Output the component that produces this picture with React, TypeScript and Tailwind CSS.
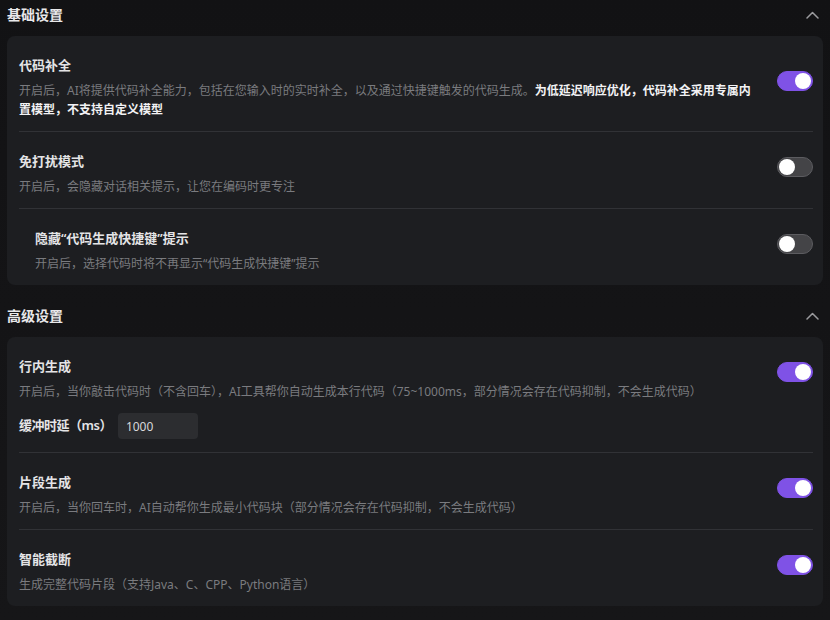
import { useState, type ReactNode } from 'react';

// Latin glyphs (and curly quotes) from Noto Sans, CJK falls through to the CJK face
const FONT = { fontFamily: '"Noto Sans", "Noto Sans CJK SC", sans-serif' };

function Toggle({ on, onChange }: { on: boolean; onChange: (v: boolean) => void }) {
  return (
    <button
      type="button"
      onClick={() => onChange(!on)}
      className={`relative mb-[13px] ml-6 h-5 w-9 shrink-0 rounded-full border transition-colors ${
        on ? 'border-[#7f52e6] bg-[#7f52e6]' : 'border-[#5c5c60] bg-[#444447]'
      }`}
    >
      <span
        className={`absolute top-1/2 h-4 w-4 -translate-y-1/2 rounded-full bg-white transition-all ${
          on ? 'left-[17px]' : 'left-[1px]'
        }`}
      />
    </button>
  );
}

function SettingRow({
  title,
  desc,
  defaultOn,
  indent,
  divider = true,
  children,
}: {
  title: string;
  desc: ReactNode;
  defaultOn: boolean;
  indent?: boolean;
  divider?: boolean;
  children?: ReactNode;
}) {
  const [on, setOn] = useState(defaultOn);
  return (
    <div className={`pt-[19px] pb-[12px] ${divider ? 'border-b border-[#313236]' : ''}`}>
      <div className={`flex items-center ${indent ? 'pl-4' : ''}`}>
        <div className="min-w-0 flex-1">
          <div className="text-[13px] leading-5 font-semibold text-[#e4e4e6]">{title}</div>
          <div className="mt-1.5 text-xs leading-[19px] text-[#7a7b7f]">{desc}</div>
        </div>
        <Toggle on={on} onChange={setOn} />
      </div>
      {children}
    </div>
  );
}

function Section({ title, children }: { title: string; children: ReactNode }) {
  const [open, setOpen] = useState(true);
  return (
    <section>
      <div className="flex h-[28px] items-center justify-between px-[7px]">
        <h2 className="text-sm font-bold text-[#e8e8ea]">{title}</h2>
        <button type="button" onClick={() => setOpen(!open)} className="p-1 text-[#9b9b9e]">
          <svg width="13" height="8" viewBox="0 0 13 8" fill="none">
            <path
              d={open ? 'M1 7 L6.5 1.5 L12 7' : 'M1 1 L6.5 6.5 L12 1'}
              stroke="currentColor"
              strokeWidth="1.5"
              strokeLinecap="round"
              strokeLinejoin="round"
            />
          </svg>
        </button>
      </div>
      {open && (
        <div className="mx-[7px] mt-[7px] rounded-lg bg-[#1d1e21] pr-[10px] pl-3">{children}</div>
      )}
    </section>
  );
}

export default function App() {
  const [delay, setDelay] = useState('1000');
  return (
    <div
      style={FONT}
      className="min-h-[620px] w-[830px] bg-gradient-to-b from-[#121214] to-[#161618] pt-[1px] pb-4"
    >
      <Section title="基础设置">
        <SettingRow
          title="代码补全"
          defaultOn
          desc={
            <>
              开启后，AI将提供代码补全能力，包括在您输入时的实时补全，以及通过快捷键触发的代码生成。
              <span className="font-bold text-[#f2f2f4]">
                为低延迟响应优化，代码补全采用专属内
                <br />
                置模型，不支持自定义模型
              </span>
            </>
          }
        />
        <SettingRow
          title="免打扰模式"
          defaultOn={false}
          desc="开启后，会隐藏对话相关提示，让您在编码时更专注"
        />
        <SettingRow
          title="隐藏“代码生成快捷键”提示"
          defaultOn={false}
          indent
          divider={false}
          desc="开启后，选择代码时将不再显示“代码生成快捷键”提示"
        />
      </Section>

      <div className="h-[17px]" />

      <Section title="高级设置">
        <SettingRow
          title="行内生成"
          defaultOn
          desc="开启后，当你敲击代码时（不含回车），AI工具帮你自动生成本行代码（75~1000ms，部分情况会存在代码抑制，不会生成代码）"
        >
          <div className="mt-[12px] mb-[1px] flex items-center gap-[6px]">
            <label className="text-[13px] font-semibold tracking-[-0.5px] text-[#e4e4e6]">
              缓冲时延（ms）
            </label>
            <input
              value={delay}
              onChange={(e) => setDelay(e.target.value)}
              className="h-[26px] w-20 rounded bg-[#2c2d30] px-2 text-xs text-[#d8d8da] outline-none"
            />
          </div>
        </SettingRow>
        <SettingRow
          title="片段生成"
          defaultOn
          desc="开启后，当你回车时，AI自动帮你生成最小代码块（部分情况会存在代码抑制，不会生成代码）"
        />
        <SettingRow
          title="智能截断"
          defaultOn
          divider={false}
          desc="生成完整代码片段（支持Java、C、CPP、Python语言）"
        />
      </Section>
    </div>
  );
}
